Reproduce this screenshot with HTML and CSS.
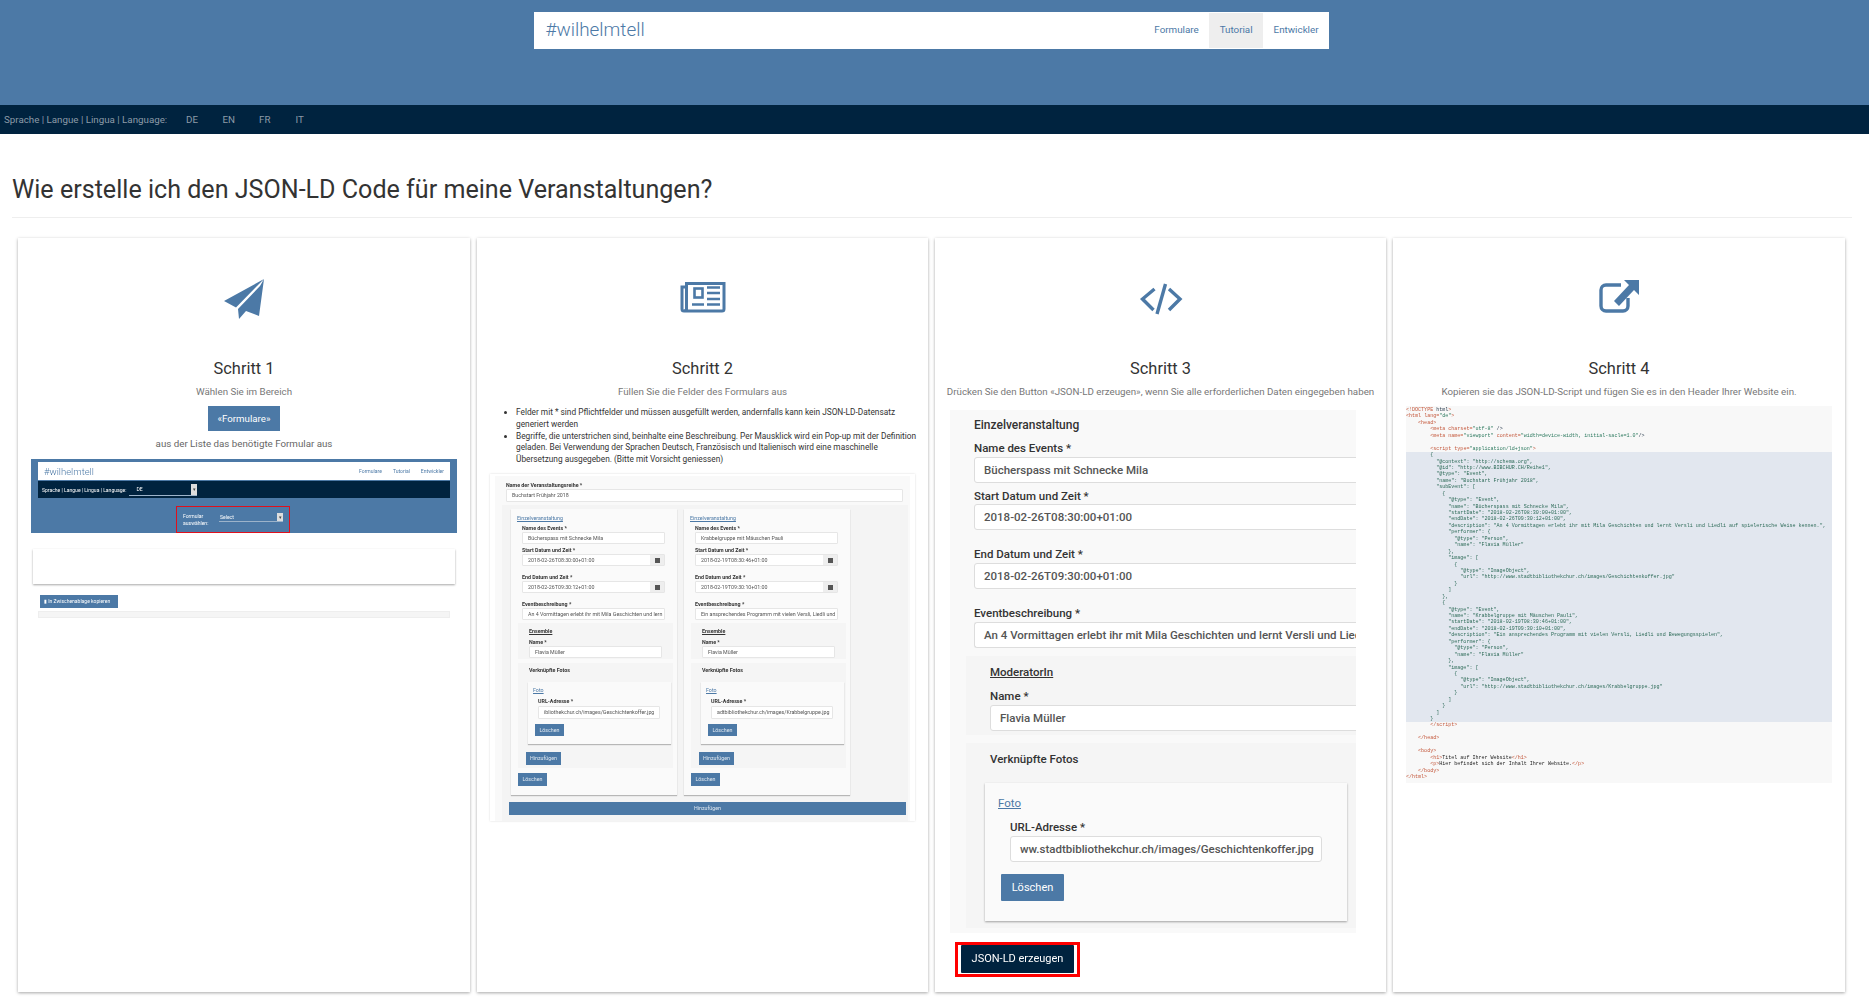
FILE: index.html
```html
<!DOCTYPE html>
<html lang="de">
<head>
    <meta charset="UTF-8">
    <title>Tutorial</title>
    <link rel="stylesheet" href="styles.css">
</head>
<body>
    <!-- header -->
    <header class="top">
        <nav class="navbar">
            <a class="brand">#wilhelmtell</a>
            <div class="nav-links">
                <a>Formulare</a>
                <a class="active">Tutorial</a>
                <a>Entwickler</a>
            </div>
        </nav>
    </header>
    <div class="lang-bar">
        <span class="lang-label">Sprache | Langue | Lingua | Language:</span>
        <a>DE</a><a>EN</a><a>FR</a><a>IT</a>
    </div>

    <main>
        <h2 class="page-title">Wie erstelle ich den JSON-LD Code für meine Veranstaltungen?</h2>
        <hr class="rule">

        <div class="steps">
            <!-- Schritt 1 -->
            <section class="step">
                <svg class="step-icon" viewBox="0 0 46 40">
                    <polygon points="43,0 3,22 15,28.5 36,7"/>
                    <polygon points="43,0 38,37 25,32 18,40 17,30 39,7"/>
                </svg>
                <h3>Schritt 1</h3>
                <p class="sub">Wählen Sie im Bereich</p>
                <a class="btn-formulare">«Formulare»</a>
                <p class="sub sub-after">aus der Liste das benötigte Formular aus</p>

                <div class="shot1">
                    <div class="s1-head">
                        <div class="s1-nav">
                            <span class="s1-brand">#wilhelmtell</span>
                            <span class="s1-links"><a>Formulare</a><a>Tutorial</a><a>Entwickler</a></span>
                        </div>
                        <div class="s1-lang">
                            <span>Sprache | Langue | Lingua | Language:</span>
                            <span class="s1-select s1-select-lang">DE<i>▾</i></span>
                        </div>
                        <div class="s1-choose">
                            <span class="s1-choose-label">Formular<br>auswählen:</span>
                            <span class="s1-select s1-select-form">Select<i>▾</i></span>
                        </div>
                    </div>
                    <div class="s1-card"></div>
                    <a class="s1-copy">▮ In Zwischenablage kopieren</a>
                    <div class="s1-bar"></div>
                </div>
            </section>

            <!-- Schritt 2 -->
            <section class="step">
                <svg class="step-icon" viewBox="0 1 46 40">
                    <path class="news-frame" d="M6.5 5.5 H44 V31 a2 2 0 0 1 -2 2 H6 a4 4 0 0 0 0.5 -2 Z M6 9 H2 V31 a2 2 0 0 0 4 0"/>
                    <rect class="news-line" x="14.5" y="10.5" width="8" height="9"/>
                    <path class="news-line" d="M27 9.5 H40 M27 15 H40 M27 21 H40 M12 26.5 H24 M27 26.5 H40"/>
                </svg>
                <h3>Schritt 2</h3>
                <p class="sub">Füllen Sie die Felder des Formulars aus</p>
                <ul class="hints">
                    <li>Felder mit * sind Pflichtfelder und müssen ausgefüllt werden, andernfalls kann kein JSON-LD-Datensatz generiert werden</li>
                    <li>Begriffe, die unterstrichen sind, beinhalte eine Beschreibung. Per Mausklick wird ein Pop-up mit der Definition geladen. Bei Verwendung der Sprachen Deutsch, Französisch und Italienisch wird eine maschinelle Übersetzung ausgegeben. (Bitte mit Vorsicht geniessen)</li>
                </ul>

                <div class="shot2">
                    <div class="s2-inner">
                        <div class="s2-label s2-series-label">Name der Veranstaltungsreihe *</div>
                        <div class="s2-field s2-series">Buchstart Frühjahr 2018</div>
                        <div class="s2-group">
                            <div class="s2-cols">
                                <div class="s2-card">
                                    <a class="s2-link">Einzelveranstaltung</a>
                                    <div class="s2-label s2-in s2-first">Name des Events *</div>
                                    <div class="s2-field s2-in s2-wide">Bücherspass mit Schnecke Mila</div>
                                    <div class="s2-label s2-in s2-tight">Start Datum und Zeit *</div>
                                    <div class="s2-field s2-in s2-wide s2-date">2018-02-26T08:30:00+01:00<i></i></div>
                                    <div class="s2-label s2-in s2-gap">End Datum und Zeit *</div>
                                    <div class="s2-field s2-in s2-wide s2-date">2018-02-26T09:30:12+01:00<i></i></div>
                                    <div class="s2-label s2-in s2-gap">Eventbeschreibung *</div>
                                    <div class="s2-field s2-in s2-wide">An 4 Vormittagen erlebt ihr mit Mila Geschichten und lern</div>
                                    <div class="s2-block s2-ensemble">
                                        <div class="s2-label s2-under">Ensemble</div>
                                        <div class="s2-label s2-name">Name *</div>
                                        <div class="s2-field s2-person">Flavia Müller</div>
                                    </div>
                                    <div class="s2-block s2-fotos">
                                        <div class="s2-label s2-fotos-title">Verknüpfte Fotos</div>
                                        <div class="s2-foto">
                                            <a class="s2-link s2-foto-link">Foto</a>
                                            <div class="s2-label s2-url-label">URL-Adresse *</div>
                                            <div class="s2-field s2-url">ibliothekchur.ch/images/Geschichtenkoffer.jpg</div>
                                            <a class="s2-btn s2-del-foto">Löschen</a>
                                        </div>
                                        <a class="s2-btn s2-add">Hinzufügen</a>
                                    </div>
                                    <a class="s2-btn s2-del">Löschen</a>
                                </div>
                                <div class="s2-card">
                                    <a class="s2-link">Einzelveranstaltung</a>
                                    <div class="s2-label s2-in s2-first">Name des Events *</div>
                                    <div class="s2-field s2-in s2-wide">Krabbelgruppe mit Mäuschen Pauli</div>
                                    <div class="s2-label s2-in s2-tight">Start Datum und Zeit *</div>
                                    <div class="s2-field s2-in s2-wide s2-date">2018-02-19T08:30:46+01:00<i></i></div>
                                    <div class="s2-label s2-in s2-gap">End Datum und Zeit *</div>
                                    <div class="s2-field s2-in s2-wide s2-date">2018-02-19T09:30:10+01:00<i></i></div>
                                    <div class="s2-label s2-in s2-gap">Eventbeschreibung *</div>
                                    <div class="s2-field s2-in s2-wide">Ein ansprechendes Programm mit vielen Versli, Liedli und</div>
                                    <div class="s2-block s2-ensemble">
                                        <div class="s2-label s2-under">Ensemble</div>
                                        <div class="s2-label s2-name">Name *</div>
                                        <div class="s2-field s2-person">Flavia Müller</div>
                                    </div>
                                    <div class="s2-block s2-fotos">
                                        <div class="s2-label s2-fotos-title">Verknüpfte Fotos</div>
                                        <div class="s2-foto">
                                            <a class="s2-link s2-foto-link">Foto</a>
                                            <div class="s2-label s2-url-label">URL-Adresse *</div>
                                            <div class="s2-field s2-url">adtbibliothekchur.ch/images/Krabbelgruppe.jpg</div>
                                            <a class="s2-btn s2-del-foto">Löschen</a>
                                        </div>
                                        <a class="s2-btn s2-add">Hinzufügen</a>
                                    </div>
                                    <a class="s2-btn s2-del">Löschen</a>
                                </div>
                            </div>
                            <a class="s2-btn s2-add-all">Hinzufügen</a>
                        </div>
                    </div>
                </div>
            </section>

            <!-- Schritt 3 -->
            <section class="step">
                <svg class="step-icon icon-code" viewBox="0 1 46 40">
                    <path d="M16.5 11 L4.5 21 L15.5 32 M31 11 L42 21 L31 32"/>
                    <path d="M27.5 6 L19 36"/>
                </svg>
                <h3>Schritt 3</h3>
                <p class="sub sub-nowrap">Drücken Sie den Button «JSON-LD erzeugen», wenn Sie alle erforderlichen Daten eingegeben haben</p>

                <div class="shot3">
                    <div class="s3-form">
                        <div class="s3-label s3-head">Einzelveranstaltung</div>
                        <div class="s3-label s3-mt7">Name des Events *</div>
                        <div class="s3-field">Bücherspass mit Schnecke Mila</div>
                        <div class="s3-label s3-mt5">Start Datum und Zeit *</div>
                        <div class="s3-field">2018-02-26T08:30:00+01:00</div>
                        <div class="s3-label s3-mt16">End Datum und Zeit *</div>
                        <div class="s3-field">2018-02-26T09:30:00+01:00</div>
                        <div class="s3-label s3-mt16">Eventbeschreibung *</div>
                        <div class="s3-field s3-clip">An 4 Vormittagen erlebt ihr mit Mila Geschichten und lernt Versli und Lied</div>

                        <div class="s3-block s3-moderator">
                            <div class="s3-label s3-under">ModeratorIn</div>
                            <div class="s3-label s3-mt8">Name *</div>
                            <div class="s3-field">Flavia Müller</div>
                        </div>

                        <div class="s3-block s3-fotos">
                            <div class="s3-label">Verknüpfte Fotos</div>
                            <div class="s3-foto">
                                <a class="s3-link">Foto</a>
                                <div class="s3-label s3-url-label">URL-Adresse *</div>
                                <div class="s3-field s3-url">ww.stadtbibliothekchur.ch/images/Geschichtenkoffer.jpg</div>
                                <a class="s3-del">Löschen</a>
                            </div>
                        </div>
                    </div>
                    <div class="s3-mark"><a class="s3-generate">JSON-LD erzeugen</a></div>
                </div>
            </section>

            <!-- Schritt 4 -->
            <section class="step">
                <svg class="step-icon" viewBox="0 0 46 40">
                    <path class="ext-box" d="M25 6 H10 a5 5 0 0 0 -5 5 V27 a5 5 0 0 0 5 5 H27 a5 5 0 0 0 5 -5 V19"/>
                    <polygon points="28,1 43,1 43,16 38,11 23,27 18,22 33,6"/>
                </svg>
                <h3>Schritt 4</h3>
                <p class="sub">Kopieren sie das JSON-LD-Script und fügen Sie es in den Header Ihrer Website ein.</p>

                <div class="shot4">
<pre class="code"><b>&lt;!DOCTYPE</b> html<b>&gt;</b>
<b>&lt;html</b> <u>lang=</u><em>"de"</em><b>&gt;</b>
    <b>&lt;head&gt;</b>
        <b>&lt;meta</b> <u>charset=</u><em>"utf-8"</em> /&gt;
        <b>&lt;meta</b> <u>name=</u><em>"viewport"</em> <u>content=</u><em>"width=device-width, initial-sacle=1.0"</em>/&gt;

        <b>&lt;script</b> <u>type=</u><em>"application/ld+json"</em><b>&gt;</b>
<span class="band">        {
          "@context": "http://schema.org",
          "@id": "http://www.BIBCHUR.CH/Reihe1",
          "@type": "Event",
          "name": "Buchstart Frühjahr 2018",
          "subEvent": [
            {
              "@type": "Event",
              "name": "Bücherspass mit Schnecke Mila",
              "startDate": "2018-02-26T08:30:00+01:00",
              "endDate": "2018-02-26T09:30:12+01:00",
              "description": "An 4 Vormittagen erlebt ihr mit Mila Geschichten und lernt Versli und Liedli auf spielerische Weise kennen.",
              "performer": {
                "@type": "Person",
                "name": "Flavia Müller"
              },
              "image": [
                {
                  "@type": "ImageObject",
                  "url": "http://www.stadtbibliothekchur.ch/images/Geschichtenkoffer.jpg"
                }
              ]
            },
            {
              "@type": "Event",
              "name": "Krabbelgruppe mit Mäuschen Pauli",
              "startDate": "2018-02-19T08:30:46+01:00",
              "endDate": "2018-02-19T09:30:10+01:00",
              "description": "Ein ansprechendes Programm mit vielen Versli, Liedli und Bewegungsspielen",
              "performer": {
                "@type": "Person",
                "name": "Flavia Müller"
              },
              "image": [
                {
                  "@type": "ImageObject",
                  "url": "http://www.stadtbibliothekchur.ch/images/Krabbelgruppe.jpg"
                }
              ]
            }
          ]
        }
</span>        <b>&lt;/script&gt;</b>

    <b>&lt;/head&gt;</b>

    <b>&lt;body&gt;</b>
        <b>&lt;h1&gt;</b><strong>Titel auf Ihrer Website</strong><b>&lt;/h1&gt;</b>
        <b>&lt;p&gt;</b><strong>Hier befindet sich der Inhalt Ihrer Website.</strong><b>&lt;/p&gt;</b>
    <b>&lt;/body&gt;</b>
<b>&lt;/html&gt;</b></pre>
                </div>
            </section>
        </div>
    </main>
</body>
</html>
```
FILE: styles.css
```css
* {
    box-sizing: border-box;
}

body {
    margin: 0;
    background: #fff;
    color: #333;
    font-family: Roboto, "Liberation Sans", sans-serif;
}

a {
    color: inherit;
    text-decoration: none;
}

/* header */
.top {
    height: 105px;
    padding-top: 12px;
    background: #4c79a6;
}

.navbar {
    display: flex;
    align-items: stretch;
    justify-content: space-between;
    width: 795px;
    height: 37px;
    margin-left: 534px;
    background: #fff;
    color: #4c79a6;
}

.brand {
    padding-left: 11.5px;
    font-size: 18.9px;
    font-weight: 300;
    line-height: 36px;
}

.nav-links {
    display: flex;
    padding: 1px 0;
    font-size: 9.8px;
    line-height: 33px;
}

.nav-links a {
    padding: 0 10.5px;
}

.nav-links .active {
    background: #eee;
}

.lang-bar {
    display: flex;
    align-items: center;
    height: 29px;
    padding-left: 4px;
    background: #00233f;
    color: #8d9ba8;
    font-size: 9.75px;
}

.lang-bar a {
    width: 36.5px;
}

.lang-label {
    width: 182px;
}

/* main */
.page-title {
    margin: 0;
    padding: 42px 0 0 12px;
    font-size: 25.1px;
    font-weight: 400;
    line-height: 28px;
}

.rule {
    height: 1px;
    margin: 13px 17px 0 12px;
    border: 0;
    background: #eee;
}

.steps {
    display: grid;
    grid-template-columns: 452px 451px 451px 452px;
    gap: 7px;
    margin: 20px 0 8px 18px;
}

.step {
    min-height: 754px;
    padding: 41px 13px 15px;
    background: #fff;
    box-shadow: 0 1px 3px rgba(0, 0, 0, 0.35);
    text-align: center;
}

.step-icon {
    display: block;
    width: 46px;
    height: 40px;
    margin: 0 auto;
    fill: #4c79a6;
}

.icon-code path {
    fill: none;
    stroke: #4c79a6;
    stroke-width: 3.4;
}

.news-frame {
    fill: none;
    stroke: #4c79a6;
    stroke-width: 3;
}

.news-line {
    fill: none;
    stroke: #4c79a6;
    stroke-width: 2.6;
}

.ext-box {
    fill: none;
    stroke: #4c79a6;
    stroke-width: 3.4;
}

.step h3 {
    margin: 40px 0 0;
    font-size: 16.4px;
    font-weight: 400;
    line-height: 20px;
}

.sub {
    margin: 6px 0 0;
    color: #777;
    font-size: 9.75px;
    line-height: 14px;
}

.sub-after {
    margin-top: 6px;
    color: #666;
}

.sub-nowrap {
    margin-left: -2px;
    margin-right: -2px;
    white-space: nowrap;
}

.btn-formulare {
    display: block;
    width: 72px;
    height: 25px;
    margin: 7px auto 0;
    background: #4c79a6;
    color: #fff;
    font-size: 9.7px;
    line-height: 25px;
}

/* mini screenshot, step 1 */
.shot1 {
    margin-top: 8px;
    text-align: left;
    filter: blur(0.3px);
}

.s1-head {
    height: 74px;
    padding: 3px 7px 0;
    background: #4c79a6;
    color: #fff;
    font-size: 5.05px;
}

.s1-nav {
    display: flex;
    align-items: center;
    justify-content: space-between;
    height: 18px;
    padding: 0 6px;
    background: #fff;
    color: #4c79a6;
}

.s1-brand {
    font-size: 9.5px;
    font-weight: 300;
}

.s1-links a {
    margin-left: 11px;
}

.s1-lang {
    display: flex;
    align-items: center;
    height: 17px;
    margin-top: 1px;
    padding-left: 4px;
    background: #00233f;
}

.s1-select {
    position: relative;
    display: block;
    height: 12px;
    border-bottom: 1px solid #9cb3ca;
    line-height: 11px;
}

.s1-select i {
    position: absolute;
    top: 0;
    right: 0;
    width: 6px;
    height: 11px;
    background: #ddd;
    color: #444;
    font-style: normal;
    font-size: 5px;
    text-align: center;
}

.s1-select-lang {
    width: 68px;
    margin-left: 3px;
    padding-left: 7px;
}

.s1-choose {
    display: flex;
    width: 114px;
    height: 27px;
    margin: 8px 0 0 138px;
    padding: 6px 0 0 6px;
    border: 1px solid #e0101c;
    line-height: 7px;
}

.s1-choose-label {
    width: 36px;
}

.s1-select-form {
    width: 64px;
    height: 9px;
    padding-left: 1px;
    line-height: 8px;
}

.s1-select-form i {
    height: 8px;
}

.s1-card {
    height: 35px;
    margin: 16px 2px 0;
    background: #fff;
    box-shadow: 0 1px 2px rgba(0, 0, 0, 0.35);
}

.s1-copy {
    display: block;
    width: 78px;
    height: 13px;
    margin: 11px 0 0 9px;
    padding-left: 4px;
    background: #4c79a6;
    color: #fff;
    font-size: 5px;
    line-height: 13px;
}

.s1-bar {
    height: 7px;
    margin: 3px 7px 0;
    border: 1px solid #eee;
    background: #f5f5f5;
}

/* step 2 */
.hints {
    margin: 8px -3px 0 0;
    padding: 0 0 0 26px;
    color: #333;
    font-size: 8.3px;
    line-height: 11.8px;
    text-align: left;
}

.shot2 {
    height: 347px;
    margin-top: 8px;
    padding: 2px 5px 0;
    box-shadow: 0 0 2px rgba(0, 0, 0, 0.15);
    text-align: left;
    filter: blur(0.3px);
}

.s2-inner {
    height: 345px;
    padding-top: 6px;
    background: #f9f9f9;
    overflow: hidden;
}

.s2-label {
    color: #333;
    font-size: 5.3px;
    font-weight: 700;
    line-height: 7px;
}

.s2-series-label {
    margin-left: 11px;
}

.s2-field {
    height: 12.5px;
    padding-left: 5px;
    overflow: hidden;
    border: 1px solid #e6e6e6;
    border-radius: 1px;
    background: #fff;
    color: #555;
    font-size: 5.3px;
    line-height: 10.5px;
    white-space: nowrap;
}

.s2-series {
    width: 397px;
    margin: 0.5px 0 0 11px;
}

.s2-group {
    height: 320px;
    margin: 3.5px 2px 0 7px;
    padding: 4px 0 0 9px;
    background: #f4f4f4;
}

.s2-cols {
    display: flex;
    gap: 7px;
}

.s2-card {
    width: 166px;
    height: 286px;
    padding-top: 5.5px;
    background: #fafafa;
    box-shadow: 0 1px 1px rgba(0, 0, 0, 0.25);
}

.s2-link {
    display: block;
    margin-left: 6px;
    color: #4c79a6;
    font-size: 5.3px;
    line-height: 7px;
    text-decoration: underline;
}

.s2-in {
    margin-left: 11px;
}

.s2-wide {
    width: 143px;
}

.s2-first {
    margin-top: 3px;
}

.s2-tight {
    margin-top: 2.5px;
}

.s2-gap {
    margin-top: 7.5px;
}

.s2-date {
    position: relative;
}

.s2-date i {
    position: absolute;
    top: 0;
    right: 0;
    width: 14px;
    height: 10.5px;
    background: #eee linear-gradient(#555, #555) center / 5px 5px no-repeat;
}

.s2-block {
    width: 155px;
    margin-left: 7px;
    background: #f5f5f5;
}

.s2-ensemble {
    height: 36px;
    margin-top: 3px;
    padding: 4.5px 0 0 11px;
}

.s2-under {
    text-decoration: underline;
}

.s2-name {
    margin-top: 4px;
}

.s2-person {
    width: 133px;
}

.s2-fotos {
    height: 105px;
    margin-top: 4px;
    padding-top: 3.5px;
}

.s2-fotos-title {
    margin-left: 11px;
}

.s2-foto {
    width: 143px;
    height: 62px;
    margin: 8.5px 0 0 10px;
    padding-top: 4.5px;
    background: #fafafa;
    box-shadow: 0 1px 1px rgba(0, 0, 0, 0.25);
}

.s2-foto-link {
    margin-left: 5px;
}

.s2-url-label {
    margin: 4px 0 0 10px;
}

.s2-url {
    width: 122px;
    margin: 1.5px 0 0 10px;
}

.s2-btn {
    display: block;
    height: 12.5px;
    background: #4c79a6;
    color: #dfe7ef;
    font-size: 5.3px;
    line-height: 12.5px;
    text-align: center;
}

.s2-del-foto {
    width: 29px;
    margin: 5px 0 0 7px;
}

.s2-add {
    width: 35px;
    margin: 8px 0 0 8px;
}

.s2-del {
    width: 29px;
    margin: 5px 0 0 7px;
}

.s2-add-all {
    width: 397px;
    margin: 7px 0 0 -2px;
}

/* step 3 */
.shot3 {
    margin: 11px 17px 0 2px;
    text-align: left;
    filter: blur(0.2px);
}

.s3-form {
    height: 523px;
    padding: 7px 0 0 24px;
    overflow: hidden;
    background: #f9f9f9;
}

.s3-label {
    color: #333;
    font-size: 11.5px;
    font-weight: 500;
    line-height: 16px;
}

.s3-mt5 {
    margin-top: 5px;
}

.s3-mt7 {
    margin-top: 7px;
}

.s3-mt8 {
    margin-top: 8px;
}

.s3-mt16 {
    margin-top: 16px;
}

.s3-under {
    text-decoration: underline;
}

.s3-field {
    width: 420px;
    height: 26px;
    margin-top: 0.5px;
    padding-left: 9px;
    overflow: hidden;
    border: 1px solid #ddd;
    border-radius: 3px;
    background: #fff;
    color: #555;
    font-size: 11.5px;
    font-weight: 500;
    line-height: 24px;
    white-space: nowrap;
}

.s3-head {
    font-size: 12px;
}

.s3-clip {
    width: 396px;
    margin-top: 1.5px;
    border-right: 0;
}

.s3-block {
    width: 420px;
    margin-left: -8px;
    padding-left: 24px;
    background: #f5f5f5;
}

.s3-moderator {
    height: 79px;
    margin-top: 8px;
    padding-top: 8px;
}

.s3-fotos {
    height: 185px;
    margin-top: 8px;
    padding-top: 8px;
}

.s3-foto {
    width: 362px;
    height: 138px;
    margin: 16px 0 0 -5px;
    padding-top: 12px;
    background: #fafafa;
    box-shadow: 0 1px 2px rgba(0, 0, 0, 0.35);
}

.s3-link {
    display: block;
    margin-left: 13px;
    color: #4c79a6;
    font-size: 11.5px;
    line-height: 16px;
    text-decoration: underline;
}

.s3-url-label {
    margin: 8px 0 0 25px;
}

.s3-url {
    width: 312px;
    margin-left: 25px;
}

.s3-del {
    display: block;
    width: 63px;
    height: 27px;
    margin: 12px 0 0 16px;
    background: #4c79a6;
    border-radius: 1px;
    color: #fff;
    font-size: 11px;
    line-height: 27px;
    text-align: center;
}

.s3-mark {
    width: 125px;
    height: 35px;
    margin: 9px 0 0 5px;
    padding: 0 3px;
    border: 3px solid #f00;
    background: #fff;
}

.s3-generate {
    display: block;
    height: 28px;
    border-radius: 1px;
    background: #00233f;
    color: #fff;
    font-size: 11px;
    line-height: 28px;
    text-align: center;
}

/* step 4 */
.shot4 {
    height: 377px;
    margin-top: 7px;
    padding-top: 1px;
    background: #f8f8f8;
    text-align: left;
    filter: blur(0.25px);
}

.code {
    margin: 0;
    overflow: hidden;
    color: #2c3e50;
    font-family: "Liberation Mono", monospace;
    font-size: 5.04px;
    line-height: 6.44px;
}

.code b {
    color: #c4583c;
    font-weight: 400;
}

.code u {
    color: #c4583c;
    text-decoration: none;
}

.code em {
    color: #2d7a5f;
    font-style: normal;
}

.code strong {
    color: #222;
    font-weight: 400;
}

.band {
    display: block;
    background: #e2e7ef;
    color: #2d6b58;
}
```
